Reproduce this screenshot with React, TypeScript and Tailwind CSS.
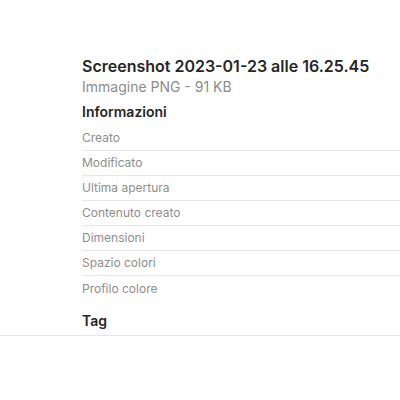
import React from "react";

const rows = [
  "Creato",
  "Modificato",
  "Ultima apertura",
  "Contenuto creato",
  "Dimensioni",
  "Spazio colori",
  "Profilo colore",
];

export default function App() {
  return (
    <div
      className="w-[400px] h-[400px] bg-white overflow-hidden"
      style={{ fontFamily: "Inter, 'Noto Sans', sans-serif" }}
    >
      <div className="pt-[56px] pl-[82px]">
        <div className="text-[16px] leading-[20px] font-semibold text-[#262626] whitespace-nowrap">
          Screenshot 2023-01-23 alle 16.25.45
        </div>
        <div className="mt-[3px] text-[14px] leading-[16px] text-[#8c8c8c]">
          Immagine PNG - 91 KB
        </div>
        <div className="mt-[9px] text-[14px] leading-[16px] font-semibold text-[#262626]">
          Informazioni
        </div>
        <div className="mt-[6px]">
          {rows.map((r, i) => (
            <div
              key={r}
              className={
                "h-[25px] flex items-center text-[12px] text-[#8e8e8e] " +
                (i < rows.length - 1 ? "border-b border-[#e6e6e6]" : "")
              }
            >
              {r}
            </div>
          ))}
        </div>
        <div className="mt-[12px] text-[14px] leading-[16px] font-semibold text-[#262626]">
          Tag
        </div>
      </div>
      <div className="mt-[6px] border-b border-[#e6e6e6]" />
    </div>
  );
}
